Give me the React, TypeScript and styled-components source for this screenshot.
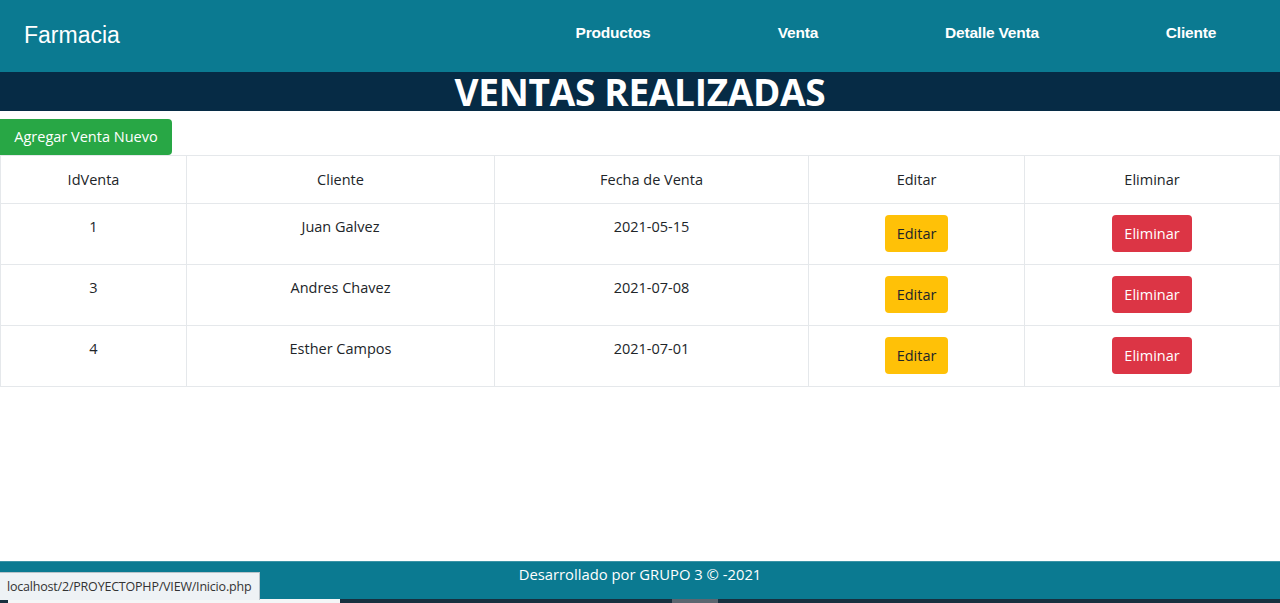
import React from 'react';
import styled, { createGlobalStyle } from 'styled-components';

const GlobalStyle = createGlobalStyle`
  html, body {
    margin: 0;
    padding: 0;
    height: 100%;
    overflow: hidden;
  }
  body {
    font-family: "Open Sans", "Noto Sans", sans-serif;
    color: #212529;
    background: #fff;
  }
`;

const Page = styled.div`
  display: flex;
  flex-direction: column;
  height: 603px;
`;

const Header = styled.header`
  display: flex;
  align-items: center;
  height: 72px;
  background: #0b7a91;
  font-family: "Liberation Sans", Arial, sans-serif;
  overflow: hidden;
`;

const Brand = styled.div`
  flex-shrink: 0;
  width: 518px;
  padding: 0 0 0 24px;
  box-sizing: border-box;
  font-size: 23px;
  color: #fff;
  margin-top: -1px;
`;

const Nav = styled.nav`
  flex-shrink: 0;
  display: grid;
  grid-template-columns: 190px 180px 208px 190px;
  align-self: flex-start;
  padding-top: 24px;
`;

const NavLink = styled.a`
  text-align: center;
  color: #fff;
  font-weight: bold;
  font-size: 15.5px;
  letter-spacing: -0.2px;
  text-decoration: none;
`;

const TitleBar = styled.div`
  height: 39px;
  background: #062b45;
  display: flex;
  align-items: center;
  justify-content: center;
`;

const Title = styled.h1`
  margin: 0;
  color: #fff;
  font-size: 37px;
  font-weight: 700;
  letter-spacing: -0.3px;
  line-height: 1;
  padding-bottom: 1px;
`;

const Main = styled.main`
  flex: 1;
  padding-top: 8px;
`;

const Btn = styled.button<{ $variant: 'success' | 'warning' | 'danger' }>`
  font-family: inherit;
  font-size: 14.5px;
  line-height: 24px;
  padding: 6px 12px;
  border: 1px solid transparent;
  border-radius: 4px;
  cursor: pointer;
  background: ${(p) =>
    p.$variant === 'success' ? '#28a745' : p.$variant === 'warning' ? '#ffc107' : '#dc3545'};
  color: ${(p) => (p.$variant === 'warning' ? '#212529' : '#fff')};
`;

const AddButton = styled(Btn)`
  display: block;
  width: 172px;
  height: 36px;
  padding: 0 12px;
  border-top-left-radius: 0;
  border-bottom-left-radius: 0;
  text-align: center;
`;

const Table = styled.table`
  width: 100%;
  border-collapse: collapse;
  text-align: center;
  font-size: 14.5px;
`;

const Th = styled.th<{ $w?: number }>`
  font-weight: 400;
  height: 48px;
  padding: 0 12px;
  box-sizing: border-box;
  border: 1px solid #e5e8eb;
  vertical-align: middle;
  width: ${(p) => (p.$w ? `${p.$w}px` : 'auto')};
`;

const Td = styled.td`
  height: 61px;
  box-sizing: border-box;
  padding: 11px 12px;
  line-height: 24px;
  border: 1px solid #e5e8eb;
  vertical-align: top;
`;

const CellButton = styled(Btn)`
  height: 37px;
  padding: 0 11px;
`;

const Footer = styled.footer`
  height: 38px;
  background: #0b7a91;
  border-top: 1px solid #3b93a6;
  box-sizing: border-box;
  color: #fff;
  text-align: center;
  font-size: 14.8px;
  line-height: 24px;
`;

const ScrollStrip = styled.div`
  height: 4px;
  background: #17303f;
  display: flex;
`;

const StripPart = styled.div<{ $w: number; $c: string }>`
  width: ${(p) => p.$w}px;
  background: ${(p) => p.$c};
`;

const StatusBar = styled.div`
  position: fixed;
  left: 0;
  bottom: 3px;
  height: 27px;
  padding: 0 8px 0 7px;
  display: flex;
  align-items: center;
  background: #eef2f5;
  border: 1px solid #b9c3c9;
  border-left: none;
  border-bottom: none;
  font-size: 12.5px;
  color: #333;
  letter-spacing: -0.2px;
`;

const ventas = [
  { id: 1, cliente: 'Juan Galvez', fecha: '2021-05-15' },
  { id: 3, cliente: 'Andres Chavez', fecha: '2021-07-08' },
  { id: 4, cliente: 'Esther Campos', fecha: '2021-07-01' },
];

export default function App() {
  return (
    <Page>
      <GlobalStyle />
      <Header>
        <Brand>Farmacia</Brand>
        <Nav>
          <NavLink href="#">Productos</NavLink>
          <NavLink href="#">Venta</NavLink>
          <NavLink href="#">Detalle Venta</NavLink>
          <NavLink href="#">Cliente</NavLink>
        </Nav>
      </Header>
      <TitleBar>
        <Title>VENTAS REALIZADAS</Title>
      </TitleBar>
      <Main>
        <AddButton $variant="success">Agregar Venta Nuevo</AddButton>
        <Table>
          <thead>
            <tr>
              <Th $w={186}>IdVenta</Th>
              <Th $w={308}>Cliente</Th>
              <Th $w={314}>Fecha de Venta</Th>
              <Th $w={216}>Editar</Th>
              <Th>Eliminar</Th>
            </tr>
          </thead>
          <tbody>
            {ventas.map((v) => (
              <tr key={v.id}>
                <Td>{v.id}</Td>
                <Td>{v.cliente}</Td>
                <Td>{v.fecha}</Td>
                <Td>
                  <CellButton $variant="warning">Editar</CellButton>
                </Td>
                <Td>
                  <CellButton $variant="danger">Eliminar</CellButton>
                </Td>
              </tr>
            ))}
          </tbody>
        </Table>
      </Main>
      <Footer>Desarrollado por GRUPO 3 © -2021</Footer>
      <ScrollStrip>
        <StripPart $w={8} $c="#17303f" />
        <StripPart $w={332} $c="#f4f6f7" />
        <StripPart $w={332} $c="#17303f" />
        <StripPart $w={46} $c="#5c6670" />
      </ScrollStrip>
      <StatusBar>localhost/2/PROYECTOPHP/VIEW/Inicio.php</StatusBar>
    </Page>
  );
}
